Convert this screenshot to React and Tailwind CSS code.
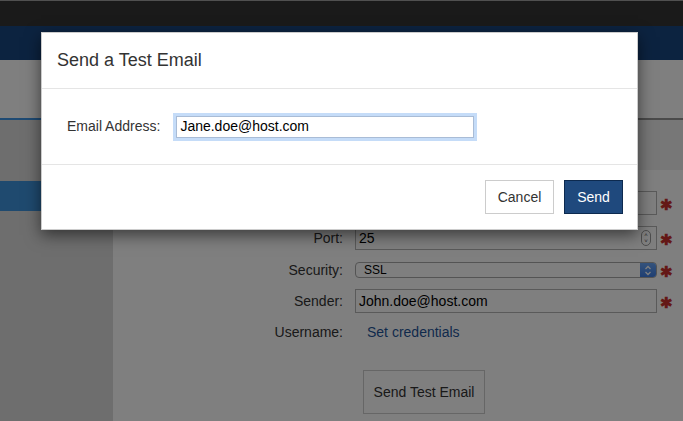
import React from "react";

function Asterisk() {
  return (
    <span className="w-[10px] ml-[4px] mt-[3px] text-[#c9302c] text-[15px] font-bold leading-none flex items-center justify-center">
      ✱
    </span>
  );
}

function Row({ label, children, mt, star = true }) {
  return (
    <div className={`flex items-center h-[24px] ${mt}`}>
      <div className="w-[230px] text-right text-[14px] text-[#333]">{label}</div>
      <div className="ml-[12px] w-[302px] h-full flex items-center">{children}</div>
      {star ? <Asterisk /> : null}
    </div>
  );
}

export default function App() {
  return (
    <div className="relative w-[683px] h-[421px] overflow-hidden font-['Liberation_Sans',Arial,sans-serif]">
      {/* background page */}
      <div className="flex flex-col h-full">
        <div className="h-[26px] bg-[#343434] border-t border-[#a0a0a0]" />
        <div className="h-[34px] bg-[#184680]" />
        <div className="h-[58px] bg-white" />
        <div className="flex h-[2px]">
          <div className="w-[113px] bg-[#3c94e6]" />
          <div className="flex-1 bg-[#949494]" />
        </div>
        <div className="flex flex-1">
          <aside className="w-[113px] bg-[#dcdcdc] pt-[61px]">
            <div className="h-[30px] bg-[#3e94de]" />
          </aside>
          <main className="flex-1 flex flex-col bg-white">
            <div className="h-[50px] bg-[#eeeeee]" />
            <div className="flex flex-col">
              <Row label="Host:" mt="mt-[21px]">
                <div className="w-full h-full border border-[#b4b4b4] bg-white" />
              </Row>
              <Row label="Port:" mt="mt-[11px]">
                <div className="relative w-full h-full border border-[#b4b4b4] bg-white flex items-center pl-[3px] text-[14px] text-black">
                  25
                  <div className="absolute right-[5px] top-[3px] w-[10px] h-[16px] border border-[#9a9a9a] rounded-[5px] flex flex-col items-center justify-center text-[6px] leading-[6px] text-[#444]">
                    <span>˄</span>
                    <span>˅</span>
                  </div>
                </div>
              </Row>
              <Row label="Security:" mt="mt-[8px]">
                <div className="w-full h-[16px] border border-[#a8a8a8] rounded-[4px] bg-white flex items-center overflow-hidden">
                  <span className="flex-1 pl-[8px] text-[12px] text-black">SSL</span>
                  <div className="w-[16px] h-full bg-gradient-to-b from-[#6aa6f8] to-[#3f7fe6] flex items-center justify-center">
                    <svg width="8" height="11" viewBox="0 0 8 11" fill="none" stroke="white" strokeWidth="1.3">
                      <path d="M1.5 4 L4 1.5 L6.5 4" />
                      <path d="M1.5 7 L4 9.5 L6.5 7" />
                    </svg>
                  </div>
                </div>
              </Row>
              <Row label="Sender:" mt="mt-[7px]">
                <div className="w-full h-full border border-[#b4b4b4] bg-white flex items-center pl-[3px] text-[14px] text-black">
                  John.doe@host.com
                </div>
              </Row>
              <Row label="Username:" mt="mt-[7px]" star={false}>
                <span className="pl-[12px] text-[14px] text-[#1f5499]">Set credentials</span>
              </Row>
              <div className="mt-[26px] ml-[250px]">
                <button className="w-[122px] h-[44px] border border-[#cccccc] bg-white text-[14px] text-[#333]">
                  Send Test Email
                </button>
              </div>
            </div>
          </main>
        </div>
      </div>

      {/* overlay */}
      <div className="absolute inset-0 bg-black/50" />

      {/* modal */}
      <div className="absolute left-[41px] top-[32px] w-[597px] bg-white border border-black/20 shadow-[0_5px_15px_rgba(0,0,0,0.55)]">
        <div className="h-[56px] px-[15px] flex items-center border-b border-[#e5e5e5] text-[18px] text-[#333]">
          Send a Test Email
        </div>
        <div className="h-[76px] flex items-center border-b border-[#e5e5e5] pl-[25px]">
          <label className="text-[14px] text-[#333]">Email Address:</label>
          <div className="ml-[16px] w-[298px] h-[22px] border border-[#a9bcd6] ring-[3px] ring-[#c5dcf8] flex items-center pl-[3px] text-[14px] text-black">
            Jane.doe@host.com
          </div>
        </div>
        <div className="h-[64px] flex items-center justify-end gap-[10px] pr-[14px]">
          <button className="w-[69px] h-[34px] border border-[#cccccc] bg-white text-[14px] text-[#333]">
            Cancel
          </button>
          <button className="w-[59px] h-[34px] border border-[#0d2a4f] bg-[#1f497d] text-[14px] text-white">
            Send
          </button>
        </div>
      </div>
    </div>
  );
}
